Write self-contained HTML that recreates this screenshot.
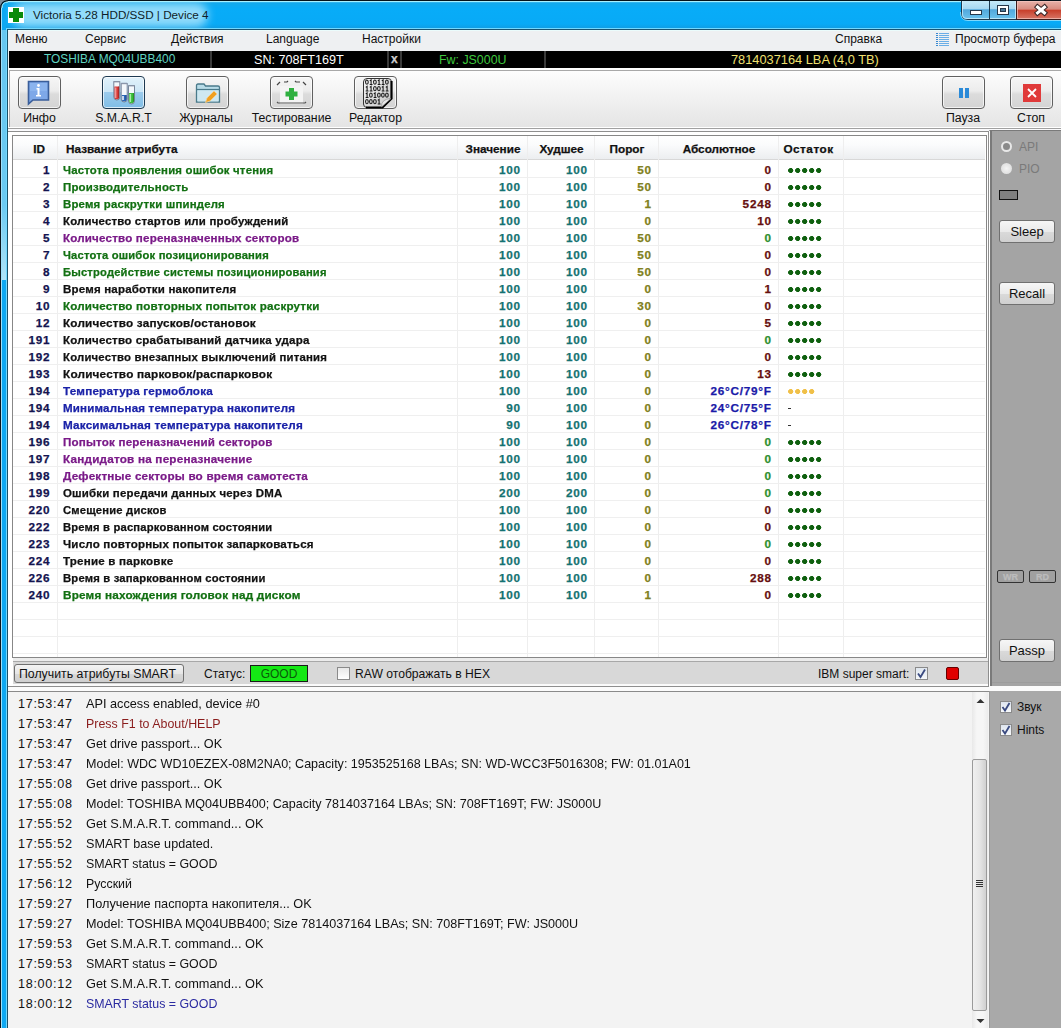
<!DOCTYPE html>
<html><head><meta charset="utf-8"><title>Victoria</title>
<style>
html,body{margin:0;padding:0;}
body{width:1061px;height:1028px;position:relative;overflow:hidden;background:#f0f0f0;font-family:"Liberation Sans", sans-serif;}
.t{position:absolute;white-space:nowrap;}
.r{position:absolute;}
svg.r{overflow:visible;}
</style></head><body>
<div class="r" style="left:0px;top:0px;width:1061px;height:30px;background:linear-gradient(#1aa8e6,#08acf8 30%,#08aaf6 80%,#1298dc);"></div>
<div class="r" style="left:0px;top:0px;width:1061px;height:1px;background:#06121a;"></div>
<div class="r" style="left:0px;top:1px;width:1061px;height:1px;background:#a8f0ff;"></div>
<div class="r" style="left:0px;top:2px;width:1061px;height:1px;background:#30b4f0;"></div>
<div class="r" style="left:0px;top:28px;width:1061px;height:1px;background:#72d8fe;"></div>
<div class="r" style="left:0px;top:29px;width:1061px;height:1px;background:#1a5470;"></div>
<div class="r" style="left:0px;top:2px;width:1061px;height:26px;overflow:hidden;"><div class="r" style="left:12px;top:1px;width:196px;height:24px;border-radius:12px;background:rgba(170,228,252,0.85);filter:blur(4px);"></div></div>
<div class="r" style="left:0px;top:0px;width:1px;height:1028px;background:#0a141c;"></div>
<div class="r" style="left:1px;top:1px;width:1px;height:1027px;background:#9fe0fa;"></div>
<div class="r" style="left:2px;top:1px;width:4px;height:1027px;background:#0ea8f2;"></div>
<div class="r" style="left:2px;top:30px;width:4px;height:250px;background:linear-gradient(#66c6f0,#6ccaf2 70%,#b0e4f8);"></div>
<div class="r" style="left:6px;top:28px;width:1px;height:1000px;background:#72d8fe;"></div>
<div class="r" style="left:7px;top:29px;width:1px;height:999px;background:#1a5068;"></div>
<svg class="r" style="left:0;top:0" width="8" height="8"><path d="M0 0 H8 V0.5 Q0.5 0.5 0.5 8 H0Z" fill="#7a8c9c"/><path d="M8 0.9 Q0.9 0.9 0.9 8" fill="none" stroke="#021018" stroke-width="1.2"/><path d="M8 2 Q2 2 2 8" fill="none" stroke="#b0f4ff" stroke-width="1"/></svg>
<div class="r" style="left:8px;top:7px;width:16px;height:16px;background:#fff;"></div>
<div class="r" style="left:13px;top:8px;width:6px;height:14px;background:#0b8a0b;"></div>
<div class="r" style="left:9px;top:12px;width:14px;height:6px;background:#0b8a0b;"></div>
<div class="t" style="left:33px;top:7.45px;font-size:11.7px;line-height:15px;color:#0e1e2a;">Victoria 5.28 HDD/SSD | Device 4</div>
<svg class="r" style="left:960px;top:0px" width="101" height="21"><defs><linearGradient id="gb" x1="0" y1="0" x2="0" y2="1"><stop offset="0" stop-color="#c8ecfa"/><stop offset="0.45" stop-color="#a6d8f2"/><stop offset="0.5" stop-color="#52a8dc"/><stop offset="1" stop-color="#6cc4ee"/></linearGradient><linearGradient id="gr" x1="0" y1="0" x2="0" y2="1"><stop offset="0" stop-color="#e8b4ac"/><stop offset="0.45" stop-color="#d88c80"/><stop offset="0.52" stop-color="#c8402c"/><stop offset="1" stop-color="#d87868"/></linearGradient></defs><path d="M1.5 0 V14 Q1.5 19.5 7 19.5 H56.5 V0Z" fill="url(#gb)" stroke="#1c3a50" stroke-width="1"/><path d="M2.5 1 V14 Q2.5 18.5 7 18.5 H55.5 V1" fill="none" stroke="#d8f4ff" stroke-width="1" opacity="0.7"/><rect x="29" y="0" width="1" height="20" fill="#1c3a50"/><rect x="56.5" y="0.5" width="45" height="19" fill="url(#gr)" stroke="#3a1c1c" stroke-width="1"/><rect x="57.5" y="1.5" width="44" height="17" fill="none" stroke="#f4c8c0" stroke-width="1" opacity="0.7"/><rect x="10.5" y="10.5" width="11" height="4" fill="#fff" stroke="#26384a" stroke-width="1"/><rect x="37.5" y="5.5" width="11" height="9" fill="#fff" stroke="#26384a" stroke-width="1"/><rect x="40.5" y="8.5" width="5" height="3" fill="#4a7898" stroke="#26384a" stroke-width="1"/><path d="M77.5 7 L84.5 13 M84.5 7 L77.5 13" stroke="#3a2626" stroke-width="5" stroke-linecap="square"/><path d="M77.5 7 L84.5 13 M84.5 7 L77.5 13" stroke="#fff" stroke-width="3" stroke-linecap="square"/></svg>
<div class="r" style="left:960px;top:0px;width:101px;height:1px;background:#06121a;"></div>
<svg class="r" style="left:960px;top:0px" width="101" height="22"><path d="M0.5 12 Q0.5 20.5 8 20.5 H101" fill="none" stroke="#9ce4fc" stroke-width="1" opacity="0.8"/></svg>
<div class="r" style="left:8px;top:30px;width:1053px;height:21px;background:#eef0f2;"></div>
<div class="r" style="left:8px;top:30px;width:1053px;height:1px;background:#eafcfc;"></div>
<div class="t" style="left:15px;top:32.34px;font-size:12px;line-height:15px;color:#111;">Меню</div>
<div class="t" style="left:85px;top:32.34px;font-size:12px;line-height:15px;color:#111;">Сервис</div>
<div class="t" style="left:171px;top:32.34px;font-size:12px;line-height:15px;color:#111;">Действия</div>
<div class="t" style="left:266px;top:32.34px;font-size:12px;line-height:15px;color:#111;">Language</div>
<div class="t" style="left:362px;top:32.34px;font-size:12px;line-height:15px;color:#111;">Настройки</div>
<div class="t" style="left:835px;top:32.34px;font-size:12px;line-height:15px;color:#111;">Справка</div>
<div class="t" style="left:955px;top:32.34px;font-size:12px;line-height:15px;color:#111;">Просмотр буфера</div>
<svg class="r" style="left:936px;top:33px" width="14" height="14"><rect x="0" y="0" width="2" height="1" fill="#3a8ad0"/><rect x="3" y="0" width="10" height="1" fill="#6aaee6"/><rect x="0" y="2" width="2" height="1" fill="#3a8ad0"/><rect x="3" y="2" width="10" height="1" fill="#6aaee6"/><rect x="0" y="4" width="2" height="1" fill="#3a8ad0"/><rect x="3" y="4" width="10" height="1" fill="#6aaee6"/><rect x="0" y="6" width="2" height="1" fill="#3a8ad0"/><rect x="3" y="6" width="10" height="1" fill="#6aaee6"/><rect x="0" y="8" width="2" height="1" fill="#3a8ad0"/><rect x="3" y="8" width="10" height="1" fill="#6aaee6"/><rect x="0" y="10" width="2" height="1" fill="#3a8ad0"/><rect x="3" y="10" width="10" height="1" fill="#6aaee6"/><rect x="0" y="12" width="2" height="1" fill="#3a8ad0"/><rect x="3" y="12" width="10" height="1" fill="#6aaee6"/></svg>
<div class="r" style="left:9px;top:51px;width:1052px;height:17px;background:#000;"></div>
<div class="r" style="left:210px;top:51px;width:2px;height:17px;background:#3a3a3a;"></div>
<div class="r" style="left:387px;top:51px;width:2px;height:17px;background:#3a3a3a;"></div>
<div class="r" style="left:400px;top:51px;width:2px;height:17px;background:#3a3a3a;"></div>
<div class="r" style="left:544px;top:51px;width:2px;height:17px;background:#3a3a3a;"></div>
<div class="t" style="left:44px;top:52.38px;font-size:11.9px;line-height:15px;color:#5fd3c0;">TOSHIBA MQ04UBB400</div>
<div class="t" style="left:254px;top:51.63px;font-size:12.6px;line-height:16px;color:#fff;">SN: 708FT169T</div>
<div class="t" style="left:391px;top:52.34px;font-size:12px;line-height:15px;color:#ccc;font-weight:bold;-webkit-text-stroke:0.25px currentColor;">x</div>
<div class="t" style="left:439px;top:51.70px;font-size:12.4px;line-height:16px;color:#3ec83e;">Fw: JS000U</div>
<div class="t" style="left:731px;top:51.56px;font-size:12.8px;line-height:16px;color:#f0e070;">7814037164 LBA (4,0 TB)</div>
<div class="r" style="left:8px;top:68px;width:1053px;height:60px;background:linear-gradient(#fff 0px,#fff 2px,#fdfdfd 3px,#e4e4e4);"></div>
<div class="r" style="left:8px;top:68px;width:1px;height:63px;background:#fcfcfc;"></div>
<div class="r" style="left:9px;top:70px;width:1052px;height:1px;background:#a8a8a8;"></div>
<div class="r" style="left:9px;top:70px;width:1px;height:58px;background:#a8a8a8;"></div>
<div class="r" style="left:8px;top:127px;width:1053px;height:1px;background:#fff;"></div>
<div class="r" style="left:8px;top:128px;width:1053px;height:1px;background:#a0a0a0;"></div>
<div class="r" style="left:8px;top:129px;width:1053px;height:2px;background:#fafafc;"></div>
<div class="r" style="left:18px;top:76px;width:43px;height:33px;box-sizing:border-box;border:1px solid #606060;border-radius:4px;background:linear-gradient(#f6f6f6,#ececec 45%,#dcdcdc 55%,#d4d4d4);box-shadow:inset 0 0 0 1px rgba(255,255,255,0.7);"></div>
<div class="r" style="left:186px;top:76px;width:43px;height:33px;box-sizing:border-box;border:1px solid #606060;border-radius:4px;background:linear-gradient(#f6f6f6,#ececec 45%,#dcdcdc 55%,#d4d4d4);box-shadow:inset 0 0 0 1px rgba(255,255,255,0.7);"></div>
<div class="r" style="left:270px;top:76px;width:43px;height:33px;box-sizing:border-box;border:1px solid #606060;border-radius:4px;background:linear-gradient(#f6f6f6,#ececec 45%,#dcdcdc 55%,#d4d4d4);box-shadow:inset 0 0 0 1px rgba(255,255,255,0.7);"></div>
<div class="r" style="left:354px;top:76px;width:43px;height:33px;box-sizing:border-box;border:1px solid #606060;border-radius:4px;background:linear-gradient(#f6f6f6,#ececec 45%,#dcdcdc 55%,#d4d4d4);box-shadow:inset 0 0 0 1px rgba(255,255,255,0.7);"></div>
<div class="r" style="left:942px;top:76px;width:43px;height:33px;box-sizing:border-box;border:1px solid #606060;border-radius:4px;background:linear-gradient(#f6f6f6,#ececec 45%,#dcdcdc 55%,#d4d4d4);box-shadow:inset 0 0 0 1px rgba(255,255,255,0.7);"></div>
<div class="r" style="left:1010px;top:76px;width:43px;height:33px;box-sizing:border-box;border:1px solid #606060;border-radius:4px;background:linear-gradient(#f6f6f6,#ececec 45%,#dcdcdc 55%,#d4d4d4);box-shadow:inset 0 0 0 1px rgba(255,255,255,0.7);"></div>
<div class="r" style="left:102px;top:76px;width:43px;height:33px;box-sizing:border-box;border:1px solid #1e3a52;border-radius:4px;background:linear-gradient(#e2f2fb,#cbe6f6 48%,#9ccbec 50%,#7fbde6);box-shadow:inset 0 0 0 1px rgba(255,255,255,0.7);"></div>
<div class="t" style="left:-20.5px;top:111.24px;font-size:12.3px;line-height:15px;color:#111;width:120px;text-align:center;">Инфо</div>
<div class="t" style="left:63.5px;top:111.24px;font-size:12.3px;line-height:15px;color:#111;width:120px;text-align:center;">S.M.A.R.T</div>
<div class="t" style="left:146px;top:111.24px;font-size:12.3px;line-height:15px;color:#111;width:120px;text-align:center;">Журналы</div>
<div class="t" style="left:231.5px;top:111.24px;font-size:12.3px;line-height:15px;color:#111;width:120px;text-align:center;">Тестирование</div>
<div class="t" style="left:315.5px;top:111.24px;font-size:12.3px;line-height:15px;color:#111;width:120px;text-align:center;">Редактор</div>
<div class="t" style="left:903px;top:111.24px;font-size:12.3px;line-height:15px;color:#111;width:120px;text-align:center;">Пауза</div>
<div class="t" style="left:971px;top:111.24px;font-size:12.3px;line-height:15px;color:#111;width:120px;text-align:center;">Стоп</div>
<svg class="r" style="left:27px;top:80px" width="24" height="26"><path d="M1.5 1.5 H21.5 V20 H6 L1.5 24 Z" fill="#7ea8e8" stroke="#3a5e9a" stroke-width="1.6"/><rect x="3" y="3" width="17" height="8" fill="#94bcf2" opacity="0.6"/><circle cx="11.5" cy="5.5" r="1.4" fill="#fff"/><path d="M9.5 8 H12.5 V15 H14 V16.5 H9 V15 H10.5 V9.5 H9.5Z" fill="#fff"/></svg>
<svg class="r" style="left:112px;top:80px" width="26" height="26"><path d="M1.8 1.5 H7.8 V17 A3 3 0 0 1 1.8 17 Z" fill="#f4f8fc"/><path d="M2.3 6.5 H7.3 V17 A2.5 2.5 0 0 1 2.3 17 Z" fill="#d83a38"/><rect x="2.8" y="7.5" width="1.6" height="10.5" fill="#f4a0a0" opacity="0.9"/><rect x="6.199999999999999" y="6.5" width="1" height="11.5" fill="#902020" opacity="0.7"/><path d="M1.8 1.5 H7.8 V17 A3 3 0 0 1 1.8 17 Z" fill="none" stroke="#6a7890" stroke-width="0.9"/><rect x="1.5" y="1.2" width="6.6" height="1.2" fill="#8a96aa"/><path d="M9.2 3.3 H15.2 V19 A3 3 0 0 1 9.2 19 Z" fill="#f4f8fc"/><path d="M9.7 15 H14.7 V19 A2.5 2.5 0 0 1 9.7 19 Z" fill="#2a66b8"/><rect x="10.2" y="16" width="1.6" height="4" fill="#ffffff" opacity="0.9"/><rect x="13.6" y="15" width="1" height="5" fill="#153a80" opacity="0.7"/><path d="M9.2 3.3 H15.2 V19 A3 3 0 0 1 9.2 19 Z" fill="none" stroke="#6a7890" stroke-width="0.9"/><rect x="8.899999999999999" y="3.0" width="6.6" height="1.2" fill="#8a96aa"/><path d="M16.5 5.5 H22.5 V21 A3 3 0 0 1 16.5 21 Z" fill="#f4f8fc"/><path d="M17.0 13 H22.0 V21 A2.5 2.5 0 0 1 17.0 21 Z" fill="#3cbc3c"/><rect x="17.5" y="14" width="1.6" height="8" fill="#b0f4b0" opacity="0.9"/><rect x="20.9" y="13" width="1" height="9" fill="#1a8a1a" opacity="0.7"/><path d="M16.5 5.5 H22.5 V21 A3 3 0 0 1 16.5 21 Z" fill="none" stroke="#6a7890" stroke-width="0.9"/><rect x="16.2" y="5.2" width="6.6" height="1.2" fill="#8a96aa"/></svg>
<svg class="r" style="left:195px;top:82px" width="26" height="22"><path d="M1.5 3.5 Q1.5 2 3 2 H9 L10.5 4 H23 Q24.5 4 24.5 5.5 V20 H1.5Z" fill="#b8dce8" stroke="#4a7a8a" stroke-width="1.3"/><path d="M1.5 7.5 H24.5" stroke="#4a7a8a" stroke-width="1.2"/><rect x="2.5" y="8.5" width="21" height="11" fill="#cfe8f0"/><path d="M10.5 20.5 L12 16 L19 9 L22 12 L15 19 Z" fill="#f0a020" stroke="#f4d090" stroke-width="0.8"/></svg>
<svg class="r" style="left:276px;top:80px" width="32" height="26"><path d="M1 5 L4 2 M8 2 H11 L12 1 M19 1 L20 2 H24 M27 2 L30 5" stroke="#444" stroke-width="1.2" fill="none"/><rect x="4" y="6" width="23" height="18" fill="#f4f4f4"/><path d="M1 22 L2 23 H29 L30 22" stroke="#555" stroke-width="1.2" fill="none"/><rect x="13" y="8" width="5" height="12" fill="#2fb040"/><rect x="9.5" y="11.5" width="12" height="5" fill="#2fb040"/></svg>
<svg class="r" style="left:361px;top:76px" width="34" height="34"><defs><linearGradient id="gd" x1="0" y1="0" x2="1" y2="1"><stop offset="0" stop-color="#fafafa"/><stop offset="1" stop-color="#c4c4c4"/></linearGradient></defs><path d="M6 2.5 H27 Q30.5 2.5 30.5 6 V22.5 L21.5 31.5 H6 Q2.5 31.5 2.5 28 V6 Q2.5 2.5 6 2.5Z" fill="url(#gd)" stroke="#333" stroke-width="1"/><path d="M30.5 5 V22.5 L21.5 31.5 H5" fill="none" stroke="#000" stroke-width="2.2"/><path d="M20.5 31 Q20 23 30 22.5 Z" fill="#e8e8e8" stroke="#888" stroke-width="0.6"/><ellipse cx="5.9" cy="6.1" rx="1.35" ry="2.1" fill="none" stroke="#1a1a1a" stroke-width="1.05"/><path d="M8.8 4.8 L10.1 3.8 V8.4 M8.7 8.4 H11.5" fill="none" stroke="#1a1a1a" stroke-width="1.05"/><ellipse cx="13.9" cy="6.1" rx="1.35" ry="2.1" fill="none" stroke="#1a1a1a" stroke-width="1.05"/><path d="M16.8 4.8 L18.1 3.8 V8.4 M16.7 8.4 H19.5" fill="none" stroke="#1a1a1a" stroke-width="1.05"/><path d="M20.8 4.8 L22.1 3.8 V8.4 M20.7 8.4 H23.5" fill="none" stroke="#1a1a1a" stroke-width="1.05"/><ellipse cx="25.9" cy="6.1" rx="1.35" ry="2.1" fill="none" stroke="#1a1a1a" stroke-width="1.05"/><path d="M4.8 11.3 L6.1 10.3 V14.9 M4.7 14.9 H7.5" fill="none" stroke="#1a1a1a" stroke-width="1.05"/><path d="M8.8 11.3 L10.1 10.3 V14.9 M8.7 14.9 H11.5" fill="none" stroke="#1a1a1a" stroke-width="1.05"/><ellipse cx="13.9" cy="12.6" rx="1.35" ry="2.1" fill="none" stroke="#1a1a1a" stroke-width="1.05"/><ellipse cx="17.9" cy="12.6" rx="1.35" ry="2.1" fill="none" stroke="#1a1a1a" stroke-width="1.05"/><path d="M20.8 11.3 L22.1 10.3 V14.9 M20.7 14.9 H23.5" fill="none" stroke="#1a1a1a" stroke-width="1.05"/><path d="M24.8 11.3 L26.1 10.3 V14.9 M24.7 14.9 H27.5" fill="none" stroke="#1a1a1a" stroke-width="1.05"/><path d="M4.8 17.8 L6.1 16.8 V21.4 M4.7 21.4 H7.5" fill="none" stroke="#1a1a1a" stroke-width="1.05"/><ellipse cx="9.9" cy="19.1" rx="1.35" ry="2.1" fill="none" stroke="#1a1a1a" stroke-width="1.05"/><path d="M12.8 17.8 L14.1 16.8 V21.4 M12.7 21.4 H15.5" fill="none" stroke="#1a1a1a" stroke-width="1.05"/><ellipse cx="17.9" cy="19.1" rx="1.35" ry="2.1" fill="none" stroke="#1a1a1a" stroke-width="1.05"/><ellipse cx="21.9" cy="19.1" rx="1.35" ry="2.1" fill="none" stroke="#1a1a1a" stroke-width="1.05"/><ellipse cx="25.9" cy="19.1" rx="1.35" ry="2.1" fill="none" stroke="#1a1a1a" stroke-width="1.05"/><ellipse cx="5.9" cy="25.6" rx="1.35" ry="2.1" fill="none" stroke="#1a1a1a" stroke-width="1.05"/><ellipse cx="9.9" cy="25.6" rx="1.35" ry="2.1" fill="none" stroke="#1a1a1a" stroke-width="1.05"/><ellipse cx="13.9" cy="25.6" rx="1.35" ry="2.1" fill="none" stroke="#1a1a1a" stroke-width="1.05"/><path d="M16.8 24.3 L18.1 23.3 V27.9 M16.7 27.9 H19.5" fill="none" stroke="#1a1a1a" stroke-width="1.05"/></svg>
<div class="r" style="left:959px;top:88px;width:4px;height:10px;background:#2a8ad8;"></div>
<div class="r" style="left:965px;top:88px;width:4px;height:10px;background:#2a8ad8;"></div>
<div class="r" style="left:1023px;top:84px;width:18px;height:18px;background:#e03a3a;"></div>
<svg class="r" style="left:1023px;top:84px" width="18" height="18"><path d="M5 5 L13 13 M13 5 L5 13" stroke="#fff" stroke-width="1.8"/></svg>
<div class="r" style="left:8px;top:131px;width:981px;height:556px;background:#fff;"></div>
<div class="r" style="left:8px;top:131px;width:981px;height:1px;background:#8e8e8e;"></div>
<div class="r" style="left:988px;top:131px;width:1px;height:556px;background:#8e8e8e;"></div>
<div class="r" style="left:8px;top:686px;width:981px;height:1px;background:#8e8e8e;"></div>
<div class="r" style="left:12px;top:135px;width:975px;height:523px;border:1px solid #878787;box-sizing:border-box;background:#fff;"></div>
<div class="r" style="left:13px;top:136px;width:972px;height:23px;background:linear-gradient(#ffffff,#fafbfc 40%,#eceef0);"></div>
<div class="r" style="left:13px;top:159px;width:972px;height:1px;background:#d8d8d8;"></div>
<div class="r" style="left:57px;top:136px;width:1px;height:521px;background:#eeeeee;"></div>
<div class="r" style="left:457px;top:136px;width:1px;height:521px;background:#eeeeee;"></div>
<div class="r" style="left:527px;top:136px;width:1px;height:521px;background:#eeeeee;"></div>
<div class="r" style="left:594px;top:136px;width:1px;height:521px;background:#eeeeee;"></div>
<div class="r" style="left:658px;top:136px;width:1px;height:521px;background:#eeeeee;"></div>
<div class="r" style="left:778px;top:136px;width:1px;height:521px;background:#eeeeee;"></div>
<div class="r" style="left:843px;top:136px;width:1px;height:521px;background:#eeeeee;"></div>
<div class="t" style="left:13px;top:141.43px;font-size:11.75px;line-height:15px;color:#111;font-weight:bold;-webkit-text-stroke:0.25px currentColor;width:32px;text-align:right;">ID</div>
<div class="t" style="left:66px;top:141.43px;font-size:11.75px;line-height:15px;color:#111;font-weight:bold;-webkit-text-stroke:0.25px currentColor;">Название атрибута</div>
<div class="t" style="left:458px;top:141.43px;font-size:11.75px;line-height:15px;color:#111;font-weight:bold;-webkit-text-stroke:0.25px currentColor;width:70px;text-align:center;">Значение</div>
<div class="t" style="left:528px;top:141.43px;font-size:11.75px;line-height:15px;color:#111;font-weight:bold;-webkit-text-stroke:0.25px currentColor;width:67px;text-align:center;">Худшее</div>
<div class="t" style="left:595px;top:141.43px;font-size:11.75px;line-height:15px;color:#111;font-weight:bold;-webkit-text-stroke:0.25px currentColor;width:64px;text-align:center;">Порог</div>
<div class="t" style="left:659px;top:141.43px;font-size:11.75px;line-height:15px;color:#111;font-weight:bold;-webkit-text-stroke:0.25px currentColor;width:120px;text-align:center;">Абсолютное</div>
<div class="t" style="left:776px;top:141.43px;font-size:11.75px;line-height:15px;color:#111;font-weight:bold;-webkit-text-stroke:0.25px currentColor;letter-spacing:0.5px;width:65px;text-align:center;">Остаток</div>
<div class="r" style="left:13px;top:177px;width:972px;height:1px;background:#efefef;"></div>
<div class="r" style="left:13px;top:194px;width:972px;height:1px;background:#efefef;"></div>
<div class="r" style="left:13px;top:211px;width:972px;height:1px;background:#efefef;"></div>
<div class="r" style="left:13px;top:228px;width:972px;height:1px;background:#efefef;"></div>
<div class="r" style="left:13px;top:245px;width:972px;height:1px;background:#efefef;"></div>
<div class="r" style="left:13px;top:262px;width:972px;height:1px;background:#efefef;"></div>
<div class="r" style="left:13px;top:279px;width:972px;height:1px;background:#efefef;"></div>
<div class="r" style="left:13px;top:296px;width:972px;height:1px;background:#efefef;"></div>
<div class="r" style="left:13px;top:313px;width:972px;height:1px;background:#efefef;"></div>
<div class="r" style="left:13px;top:330px;width:972px;height:1px;background:#efefef;"></div>
<div class="r" style="left:13px;top:347px;width:972px;height:1px;background:#efefef;"></div>
<div class="r" style="left:13px;top:364px;width:972px;height:1px;background:#efefef;"></div>
<div class="r" style="left:13px;top:381px;width:972px;height:1px;background:#efefef;"></div>
<div class="r" style="left:13px;top:398px;width:972px;height:1px;background:#efefef;"></div>
<div class="r" style="left:13px;top:415px;width:972px;height:1px;background:#efefef;"></div>
<div class="r" style="left:13px;top:432px;width:972px;height:1px;background:#efefef;"></div>
<div class="r" style="left:13px;top:449px;width:972px;height:1px;background:#efefef;"></div>
<div class="r" style="left:13px;top:466px;width:972px;height:1px;background:#efefef;"></div>
<div class="r" style="left:13px;top:483px;width:972px;height:1px;background:#efefef;"></div>
<div class="r" style="left:13px;top:500px;width:972px;height:1px;background:#efefef;"></div>
<div class="r" style="left:13px;top:517px;width:972px;height:1px;background:#efefef;"></div>
<div class="r" style="left:13px;top:534px;width:972px;height:1px;background:#efefef;"></div>
<div class="r" style="left:13px;top:551px;width:972px;height:1px;background:#efefef;"></div>
<div class="r" style="left:13px;top:568px;width:972px;height:1px;background:#efefef;"></div>
<div class="r" style="left:13px;top:585px;width:972px;height:1px;background:#efefef;"></div>
<div class="r" style="left:13px;top:602px;width:972px;height:1px;background:#efefef;"></div>
<div class="r" style="left:13px;top:619px;width:972px;height:1px;background:#efefef;"></div>
<div class="r" style="left:13px;top:636px;width:972px;height:1px;background:#efefef;"></div>
<div class="r" style="left:13px;top:653px;width:972px;height:1px;background:#efefef;"></div>
<div class="t" style="left:-100.5px;top:162.43px;font-size:11.75px;line-height:15px;color:#141450;font-weight:bold;-webkit-text-stroke:0.25px currentColor;letter-spacing:0.75px;width:150.75px;text-align:right;">1</div>
<div class="t" style="left:63px;top:163.02px;font-size:11.5px;line-height:14px;color:#127012;font-weight:bold;-webkit-text-stroke:0.25px currentColor;letter-spacing:0.19px;transform:scaleX(0.9891);transform-origin:0 0;">Частота проявления ошибок чтения</div>
<div class="t" style="left:370px;top:162.43px;font-size:11.75px;line-height:15px;color:#147272;font-weight:bold;-webkit-text-stroke:0.25px currentColor;letter-spacing:0.75px;width:150.75px;text-align:right;">100</div>
<div class="t" style="left:437px;top:162.43px;font-size:11.75px;line-height:15px;color:#147272;font-weight:bold;-webkit-text-stroke:0.25px currentColor;letter-spacing:0.75px;width:150.75px;text-align:right;">100</div>
<div class="t" style="left:501px;top:162.43px;font-size:11.75px;line-height:15px;color:#808020;font-weight:bold;-webkit-text-stroke:0.25px currentColor;letter-spacing:0.75px;width:150.75px;text-align:right;">50</div>
<div class="t" style="left:621px;top:162.43px;font-size:11.75px;line-height:15px;color:#661010;font-weight:bold;-webkit-text-stroke:0.25px currentColor;letter-spacing:0.75px;width:150.75px;text-align:right;">0</div>
<div class="r" style="left:787.5px;top:167.5px;width:35px;height:5.5px;background:radial-gradient(circle at 2.75px 2.75px,#0f600f 2.4px,rgba(15,96,15,0) 2.9px) 0 0/7px 5.5px repeat-x;"></div>
<div class="t" style="left:-100.5px;top:179.43px;font-size:11.75px;line-height:15px;color:#141450;font-weight:bold;-webkit-text-stroke:0.25px currentColor;letter-spacing:0.75px;width:150.75px;text-align:right;">2</div>
<div class="t" style="left:63px;top:180.02px;font-size:11.5px;line-height:14px;color:#127012;font-weight:bold;-webkit-text-stroke:0.25px currentColor;letter-spacing:0.19px;transform:scaleX(0.9968);transform-origin:0 0;">Производительность</div>
<div class="t" style="left:370px;top:179.43px;font-size:11.75px;line-height:15px;color:#147272;font-weight:bold;-webkit-text-stroke:0.25px currentColor;letter-spacing:0.75px;width:150.75px;text-align:right;">100</div>
<div class="t" style="left:437px;top:179.43px;font-size:11.75px;line-height:15px;color:#147272;font-weight:bold;-webkit-text-stroke:0.25px currentColor;letter-spacing:0.75px;width:150.75px;text-align:right;">100</div>
<div class="t" style="left:501px;top:179.43px;font-size:11.75px;line-height:15px;color:#808020;font-weight:bold;-webkit-text-stroke:0.25px currentColor;letter-spacing:0.75px;width:150.75px;text-align:right;">50</div>
<div class="t" style="left:621px;top:179.43px;font-size:11.75px;line-height:15px;color:#661010;font-weight:bold;-webkit-text-stroke:0.25px currentColor;letter-spacing:0.75px;width:150.75px;text-align:right;">0</div>
<div class="r" style="left:787.5px;top:184.5px;width:35px;height:5.5px;background:radial-gradient(circle at 2.75px 2.75px,#0f600f 2.4px,rgba(15,96,15,0) 2.9px) 0 0/7px 5.5px repeat-x;"></div>
<div class="t" style="left:-100.5px;top:196.43px;font-size:11.75px;line-height:15px;color:#141450;font-weight:bold;-webkit-text-stroke:0.25px currentColor;letter-spacing:0.75px;width:150.75px;text-align:right;">3</div>
<div class="t" style="left:63px;top:197.02px;font-size:11.5px;line-height:14px;color:#127012;font-weight:bold;-webkit-text-stroke:0.25px currentColor;letter-spacing:0.19px;transform:scaleX(0.9908);transform-origin:0 0;">Время раскрутки шпинделя</div>
<div class="t" style="left:370px;top:196.43px;font-size:11.75px;line-height:15px;color:#147272;font-weight:bold;-webkit-text-stroke:0.25px currentColor;letter-spacing:0.75px;width:150.75px;text-align:right;">100</div>
<div class="t" style="left:437px;top:196.43px;font-size:11.75px;line-height:15px;color:#147272;font-weight:bold;-webkit-text-stroke:0.25px currentColor;letter-spacing:0.75px;width:150.75px;text-align:right;">100</div>
<div class="t" style="left:501px;top:196.43px;font-size:11.75px;line-height:15px;color:#808020;font-weight:bold;-webkit-text-stroke:0.25px currentColor;letter-spacing:0.75px;width:150.75px;text-align:right;">1</div>
<div class="t" style="left:621px;top:196.43px;font-size:11.75px;line-height:15px;color:#661010;font-weight:bold;-webkit-text-stroke:0.25px currentColor;letter-spacing:0.75px;width:150.75px;text-align:right;">5248</div>
<div class="r" style="left:787.5px;top:201.5px;width:35px;height:5.5px;background:radial-gradient(circle at 2.75px 2.75px,#0f600f 2.4px,rgba(15,96,15,0) 2.9px) 0 0/7px 5.5px repeat-x;"></div>
<div class="t" style="left:-100.5px;top:213.43px;font-size:11.75px;line-height:15px;color:#141450;font-weight:bold;-webkit-text-stroke:0.25px currentColor;letter-spacing:0.75px;width:150.75px;text-align:right;">4</div>
<div class="t" style="left:63px;top:214.02px;font-size:11.5px;line-height:14px;color:#111111;font-weight:bold;-webkit-text-stroke:0.25px currentColor;letter-spacing:0.19px;transform:scaleX(0.9938);transform-origin:0 0;">Количество стартов или пробуждений</div>
<div class="t" style="left:370px;top:213.43px;font-size:11.75px;line-height:15px;color:#147272;font-weight:bold;-webkit-text-stroke:0.25px currentColor;letter-spacing:0.75px;width:150.75px;text-align:right;">100</div>
<div class="t" style="left:437px;top:213.43px;font-size:11.75px;line-height:15px;color:#147272;font-weight:bold;-webkit-text-stroke:0.25px currentColor;letter-spacing:0.75px;width:150.75px;text-align:right;">100</div>
<div class="t" style="left:501px;top:213.43px;font-size:11.75px;line-height:15px;color:#808020;font-weight:bold;-webkit-text-stroke:0.25px currentColor;letter-spacing:0.75px;width:150.75px;text-align:right;">0</div>
<div class="t" style="left:621px;top:213.43px;font-size:11.75px;line-height:15px;color:#661010;font-weight:bold;-webkit-text-stroke:0.25px currentColor;letter-spacing:0.75px;width:150.75px;text-align:right;">10</div>
<div class="r" style="left:787.5px;top:218.5px;width:35px;height:5.5px;background:radial-gradient(circle at 2.75px 2.75px,#0f600f 2.4px,rgba(15,96,15,0) 2.9px) 0 0/7px 5.5px repeat-x;"></div>
<div class="t" style="left:-100.5px;top:230.43px;font-size:11.75px;line-height:15px;color:#141450;font-weight:bold;-webkit-text-stroke:0.25px currentColor;letter-spacing:0.75px;width:150.75px;text-align:right;">5</div>
<div class="t" style="left:63px;top:231.02px;font-size:11.5px;line-height:14px;color:#7a1a88;font-weight:bold;-webkit-text-stroke:0.25px currentColor;letter-spacing:0.19px;transform:scaleX(1.0077);transform-origin:0 0;">Количество переназначенных секторов</div>
<div class="t" style="left:370px;top:230.43px;font-size:11.75px;line-height:15px;color:#147272;font-weight:bold;-webkit-text-stroke:0.25px currentColor;letter-spacing:0.75px;width:150.75px;text-align:right;">100</div>
<div class="t" style="left:437px;top:230.43px;font-size:11.75px;line-height:15px;color:#147272;font-weight:bold;-webkit-text-stroke:0.25px currentColor;letter-spacing:0.75px;width:150.75px;text-align:right;">100</div>
<div class="t" style="left:501px;top:230.43px;font-size:11.75px;line-height:15px;color:#808020;font-weight:bold;-webkit-text-stroke:0.25px currentColor;letter-spacing:0.75px;width:150.75px;text-align:right;">50</div>
<div class="t" style="left:621px;top:230.43px;font-size:11.75px;line-height:15px;color:#2f8f2f;font-weight:bold;-webkit-text-stroke:0.25px currentColor;letter-spacing:0.75px;width:150.75px;text-align:right;">0</div>
<div class="r" style="left:787.5px;top:235.5px;width:35px;height:5.5px;background:radial-gradient(circle at 2.75px 2.75px,#0f600f 2.4px,rgba(15,96,15,0) 2.9px) 0 0/7px 5.5px repeat-x;"></div>
<div class="t" style="left:-100.5px;top:247.43px;font-size:11.75px;line-height:15px;color:#141450;font-weight:bold;-webkit-text-stroke:0.25px currentColor;letter-spacing:0.75px;width:150.75px;text-align:right;">7</div>
<div class="t" style="left:63px;top:248.02px;font-size:11.5px;line-height:14px;color:#127012;font-weight:bold;-webkit-text-stroke:0.25px currentColor;letter-spacing:0.19px;transform:scaleX(0.9766);transform-origin:0 0;">Частота ошибок позиционирования</div>
<div class="t" style="left:370px;top:247.43px;font-size:11.75px;line-height:15px;color:#147272;font-weight:bold;-webkit-text-stroke:0.25px currentColor;letter-spacing:0.75px;width:150.75px;text-align:right;">100</div>
<div class="t" style="left:437px;top:247.43px;font-size:11.75px;line-height:15px;color:#147272;font-weight:bold;-webkit-text-stroke:0.25px currentColor;letter-spacing:0.75px;width:150.75px;text-align:right;">100</div>
<div class="t" style="left:501px;top:247.43px;font-size:11.75px;line-height:15px;color:#808020;font-weight:bold;-webkit-text-stroke:0.25px currentColor;letter-spacing:0.75px;width:150.75px;text-align:right;">50</div>
<div class="t" style="left:621px;top:247.43px;font-size:11.75px;line-height:15px;color:#661010;font-weight:bold;-webkit-text-stroke:0.25px currentColor;letter-spacing:0.75px;width:150.75px;text-align:right;">0</div>
<div class="r" style="left:787.5px;top:252.5px;width:35px;height:5.5px;background:radial-gradient(circle at 2.75px 2.75px,#0f600f 2.4px,rgba(15,96,15,0) 2.9px) 0 0/7px 5.5px repeat-x;"></div>
<div class="t" style="left:-100.5px;top:264.43px;font-size:11.75px;line-height:15px;color:#141450;font-weight:bold;-webkit-text-stroke:0.25px currentColor;letter-spacing:0.75px;width:150.75px;text-align:right;">8</div>
<div class="t" style="left:63px;top:265.02px;font-size:11.5px;line-height:14px;color:#127012;font-weight:bold;-webkit-text-stroke:0.25px currentColor;letter-spacing:0.19px;transform:scaleX(0.9725);transform-origin:0 0;">Быстродействие системы позиционирования</div>
<div class="t" style="left:370px;top:264.43px;font-size:11.75px;line-height:15px;color:#147272;font-weight:bold;-webkit-text-stroke:0.25px currentColor;letter-spacing:0.75px;width:150.75px;text-align:right;">100</div>
<div class="t" style="left:437px;top:264.43px;font-size:11.75px;line-height:15px;color:#147272;font-weight:bold;-webkit-text-stroke:0.25px currentColor;letter-spacing:0.75px;width:150.75px;text-align:right;">100</div>
<div class="t" style="left:501px;top:264.43px;font-size:11.75px;line-height:15px;color:#808020;font-weight:bold;-webkit-text-stroke:0.25px currentColor;letter-spacing:0.75px;width:150.75px;text-align:right;">50</div>
<div class="t" style="left:621px;top:264.43px;font-size:11.75px;line-height:15px;color:#661010;font-weight:bold;-webkit-text-stroke:0.25px currentColor;letter-spacing:0.75px;width:150.75px;text-align:right;">0</div>
<div class="r" style="left:787.5px;top:269.5px;width:35px;height:5.5px;background:radial-gradient(circle at 2.75px 2.75px,#0f600f 2.4px,rgba(15,96,15,0) 2.9px) 0 0/7px 5.5px repeat-x;"></div>
<div class="t" style="left:-100.5px;top:281.43px;font-size:11.75px;line-height:15px;color:#141450;font-weight:bold;-webkit-text-stroke:0.25px currentColor;letter-spacing:0.75px;width:150.75px;text-align:right;">9</div>
<div class="t" style="left:63px;top:282.02px;font-size:11.5px;line-height:14px;color:#111111;font-weight:bold;-webkit-text-stroke:0.25px currentColor;letter-spacing:0.19px;transform:scaleX(1.0012);transform-origin:0 0;">Время наработки накопителя</div>
<div class="t" style="left:370px;top:281.43px;font-size:11.75px;line-height:15px;color:#147272;font-weight:bold;-webkit-text-stroke:0.25px currentColor;letter-spacing:0.75px;width:150.75px;text-align:right;">100</div>
<div class="t" style="left:437px;top:281.43px;font-size:11.75px;line-height:15px;color:#147272;font-weight:bold;-webkit-text-stroke:0.25px currentColor;letter-spacing:0.75px;width:150.75px;text-align:right;">100</div>
<div class="t" style="left:501px;top:281.43px;font-size:11.75px;line-height:15px;color:#808020;font-weight:bold;-webkit-text-stroke:0.25px currentColor;letter-spacing:0.75px;width:150.75px;text-align:right;">0</div>
<div class="t" style="left:621px;top:281.43px;font-size:11.75px;line-height:15px;color:#661010;font-weight:bold;-webkit-text-stroke:0.25px currentColor;letter-spacing:0.75px;width:150.75px;text-align:right;">1</div>
<div class="r" style="left:787.5px;top:286.5px;width:35px;height:5.5px;background:radial-gradient(circle at 2.75px 2.75px,#0f600f 2.4px,rgba(15,96,15,0) 2.9px) 0 0/7px 5.5px repeat-x;"></div>
<div class="t" style="left:-100.5px;top:298.43px;font-size:11.75px;line-height:15px;color:#141450;font-weight:bold;-webkit-text-stroke:0.25px currentColor;letter-spacing:0.75px;width:150.75px;text-align:right;">10</div>
<div class="t" style="left:63px;top:299.02px;font-size:11.5px;line-height:14px;color:#127012;font-weight:bold;-webkit-text-stroke:0.25px currentColor;letter-spacing:0.19px;transform:scaleX(1.0107);transform-origin:0 0;">Количество повторных попыток раскрутки</div>
<div class="t" style="left:370px;top:298.43px;font-size:11.75px;line-height:15px;color:#147272;font-weight:bold;-webkit-text-stroke:0.25px currentColor;letter-spacing:0.75px;width:150.75px;text-align:right;">100</div>
<div class="t" style="left:437px;top:298.43px;font-size:11.75px;line-height:15px;color:#147272;font-weight:bold;-webkit-text-stroke:0.25px currentColor;letter-spacing:0.75px;width:150.75px;text-align:right;">100</div>
<div class="t" style="left:501px;top:298.43px;font-size:11.75px;line-height:15px;color:#808020;font-weight:bold;-webkit-text-stroke:0.25px currentColor;letter-spacing:0.75px;width:150.75px;text-align:right;">30</div>
<div class="t" style="left:621px;top:298.43px;font-size:11.75px;line-height:15px;color:#661010;font-weight:bold;-webkit-text-stroke:0.25px currentColor;letter-spacing:0.75px;width:150.75px;text-align:right;">0</div>
<div class="r" style="left:787.5px;top:303.5px;width:35px;height:5.5px;background:radial-gradient(circle at 2.75px 2.75px,#0f600f 2.4px,rgba(15,96,15,0) 2.9px) 0 0/7px 5.5px repeat-x;"></div>
<div class="t" style="left:-100.5px;top:315.43px;font-size:11.75px;line-height:15px;color:#141450;font-weight:bold;-webkit-text-stroke:0.25px currentColor;letter-spacing:0.75px;width:150.75px;text-align:right;">12</div>
<div class="t" style="left:63px;top:316.02px;font-size:11.5px;line-height:14px;color:#111111;font-weight:bold;-webkit-text-stroke:0.25px currentColor;letter-spacing:0.19px;transform:scaleX(1.0207);transform-origin:0 0;">Количество запусков/остановок</div>
<div class="t" style="left:370px;top:315.43px;font-size:11.75px;line-height:15px;color:#147272;font-weight:bold;-webkit-text-stroke:0.25px currentColor;letter-spacing:0.75px;width:150.75px;text-align:right;">100</div>
<div class="t" style="left:437px;top:315.43px;font-size:11.75px;line-height:15px;color:#147272;font-weight:bold;-webkit-text-stroke:0.25px currentColor;letter-spacing:0.75px;width:150.75px;text-align:right;">100</div>
<div class="t" style="left:501px;top:315.43px;font-size:11.75px;line-height:15px;color:#808020;font-weight:bold;-webkit-text-stroke:0.25px currentColor;letter-spacing:0.75px;width:150.75px;text-align:right;">0</div>
<div class="t" style="left:621px;top:315.43px;font-size:11.75px;line-height:15px;color:#661010;font-weight:bold;-webkit-text-stroke:0.25px currentColor;letter-spacing:0.75px;width:150.75px;text-align:right;">5</div>
<div class="r" style="left:787.5px;top:320.5px;width:35px;height:5.5px;background:radial-gradient(circle at 2.75px 2.75px,#0f600f 2.4px,rgba(15,96,15,0) 2.9px) 0 0/7px 5.5px repeat-x;"></div>
<div class="t" style="left:-100.5px;top:332.43px;font-size:11.75px;line-height:15px;color:#141450;font-weight:bold;-webkit-text-stroke:0.25px currentColor;letter-spacing:0.75px;width:150.75px;text-align:right;">191</div>
<div class="t" style="left:63px;top:333.02px;font-size:11.5px;line-height:14px;color:#111111;font-weight:bold;-webkit-text-stroke:0.25px currentColor;letter-spacing:0.19px;transform:scaleX(1.0053);transform-origin:0 0;">Количество срабатываний датчика удара</div>
<div class="t" style="left:370px;top:332.43px;font-size:11.75px;line-height:15px;color:#147272;font-weight:bold;-webkit-text-stroke:0.25px currentColor;letter-spacing:0.75px;width:150.75px;text-align:right;">100</div>
<div class="t" style="left:437px;top:332.43px;font-size:11.75px;line-height:15px;color:#147272;font-weight:bold;-webkit-text-stroke:0.25px currentColor;letter-spacing:0.75px;width:150.75px;text-align:right;">100</div>
<div class="t" style="left:501px;top:332.43px;font-size:11.75px;line-height:15px;color:#808020;font-weight:bold;-webkit-text-stroke:0.25px currentColor;letter-spacing:0.75px;width:150.75px;text-align:right;">0</div>
<div class="t" style="left:621px;top:332.43px;font-size:11.75px;line-height:15px;color:#2f8f2f;font-weight:bold;-webkit-text-stroke:0.25px currentColor;letter-spacing:0.75px;width:150.75px;text-align:right;">0</div>
<div class="r" style="left:787.5px;top:337.5px;width:35px;height:5.5px;background:radial-gradient(circle at 2.75px 2.75px,#0f600f 2.4px,rgba(15,96,15,0) 2.9px) 0 0/7px 5.5px repeat-x;"></div>
<div class="t" style="left:-100.5px;top:349.43px;font-size:11.75px;line-height:15px;color:#141450;font-weight:bold;-webkit-text-stroke:0.25px currentColor;letter-spacing:0.75px;width:150.75px;text-align:right;">192</div>
<div class="t" style="left:63px;top:350.02px;font-size:11.5px;line-height:14px;color:#111111;font-weight:bold;-webkit-text-stroke:0.25px currentColor;letter-spacing:0.19px;transform:scaleX(0.9891);transform-origin:0 0;">Количество внезапных выключений питания</div>
<div class="t" style="left:370px;top:349.43px;font-size:11.75px;line-height:15px;color:#147272;font-weight:bold;-webkit-text-stroke:0.25px currentColor;letter-spacing:0.75px;width:150.75px;text-align:right;">100</div>
<div class="t" style="left:437px;top:349.43px;font-size:11.75px;line-height:15px;color:#147272;font-weight:bold;-webkit-text-stroke:0.25px currentColor;letter-spacing:0.75px;width:150.75px;text-align:right;">100</div>
<div class="t" style="left:501px;top:349.43px;font-size:11.75px;line-height:15px;color:#808020;font-weight:bold;-webkit-text-stroke:0.25px currentColor;letter-spacing:0.75px;width:150.75px;text-align:right;">0</div>
<div class="t" style="left:621px;top:349.43px;font-size:11.75px;line-height:15px;color:#661010;font-weight:bold;-webkit-text-stroke:0.25px currentColor;letter-spacing:0.75px;width:150.75px;text-align:right;">0</div>
<div class="r" style="left:787.5px;top:354.5px;width:35px;height:5.5px;background:radial-gradient(circle at 2.75px 2.75px,#0f600f 2.4px,rgba(15,96,15,0) 2.9px) 0 0/7px 5.5px repeat-x;"></div>
<div class="t" style="left:-100.5px;top:366.43px;font-size:11.75px;line-height:15px;color:#141450;font-weight:bold;-webkit-text-stroke:0.25px currentColor;letter-spacing:0.75px;width:150.75px;text-align:right;">193</div>
<div class="t" style="left:63px;top:367.02px;font-size:11.5px;line-height:14px;color:#111111;font-weight:bold;-webkit-text-stroke:0.25px currentColor;letter-spacing:0.19px;transform:scaleX(1.0231);transform-origin:0 0;">Количество парковок/распарковок</div>
<div class="t" style="left:370px;top:366.43px;font-size:11.75px;line-height:15px;color:#147272;font-weight:bold;-webkit-text-stroke:0.25px currentColor;letter-spacing:0.75px;width:150.75px;text-align:right;">100</div>
<div class="t" style="left:437px;top:366.43px;font-size:11.75px;line-height:15px;color:#147272;font-weight:bold;-webkit-text-stroke:0.25px currentColor;letter-spacing:0.75px;width:150.75px;text-align:right;">100</div>
<div class="t" style="left:501px;top:366.43px;font-size:11.75px;line-height:15px;color:#808020;font-weight:bold;-webkit-text-stroke:0.25px currentColor;letter-spacing:0.75px;width:150.75px;text-align:right;">0</div>
<div class="t" style="left:621px;top:366.43px;font-size:11.75px;line-height:15px;color:#661010;font-weight:bold;-webkit-text-stroke:0.25px currentColor;letter-spacing:0.75px;width:150.75px;text-align:right;">13</div>
<div class="r" style="left:787.5px;top:371.5px;width:35px;height:5.5px;background:radial-gradient(circle at 2.75px 2.75px,#0f600f 2.4px,rgba(15,96,15,0) 2.9px) 0 0/7px 5.5px repeat-x;"></div>
<div class="t" style="left:-100.5px;top:383.43px;font-size:11.75px;line-height:15px;color:#141450;font-weight:bold;-webkit-text-stroke:0.25px currentColor;letter-spacing:0.75px;width:150.75px;text-align:right;">194</div>
<div class="t" style="left:63px;top:384.02px;font-size:11.5px;line-height:14px;color:#1a22a8;font-weight:bold;-webkit-text-stroke:0.25px currentColor;letter-spacing:0.19px;transform:scaleX(1.0163);transform-origin:0 0;">Температура гермоблока</div>
<div class="t" style="left:370px;top:383.43px;font-size:11.75px;line-height:15px;color:#147272;font-weight:bold;-webkit-text-stroke:0.25px currentColor;letter-spacing:0.75px;width:150.75px;text-align:right;">100</div>
<div class="t" style="left:437px;top:383.43px;font-size:11.75px;line-height:15px;color:#147272;font-weight:bold;-webkit-text-stroke:0.25px currentColor;letter-spacing:0.75px;width:150.75px;text-align:right;">100</div>
<div class="t" style="left:501px;top:383.43px;font-size:11.75px;line-height:15px;color:#808020;font-weight:bold;-webkit-text-stroke:0.25px currentColor;letter-spacing:0.75px;width:150.75px;text-align:right;">0</div>
<div class="t" style="left:621px;top:383.43px;font-size:11.75px;line-height:15px;color:#1a1aa8;font-weight:bold;-webkit-text-stroke:0.25px currentColor;letter-spacing:0.75px;width:150.75px;text-align:right;">26°C/79°F</div>
<div class="r" style="left:787.5px;top:388.5px;width:28px;height:5.5px;background:radial-gradient(circle at 2.75px 2.75px,#f0c048 2.4px,rgba(240,192,72,0) 2.9px) 0 0/7px 5.5px repeat-x;"></div>
<div class="t" style="left:-100.5px;top:400.43px;font-size:11.75px;line-height:15px;color:#141450;font-weight:bold;-webkit-text-stroke:0.25px currentColor;letter-spacing:0.75px;width:150.75px;text-align:right;">194</div>
<div class="t" style="left:63px;top:401.02px;font-size:11.5px;line-height:14px;color:#1a22a8;font-weight:bold;-webkit-text-stroke:0.25px currentColor;letter-spacing:0.19px;transform:scaleX(1.003);transform-origin:0 0;">Минимальная температура накопителя</div>
<div class="t" style="left:370px;top:400.43px;font-size:11.75px;line-height:15px;color:#147272;font-weight:bold;-webkit-text-stroke:0.25px currentColor;letter-spacing:0.75px;width:150.75px;text-align:right;">90</div>
<div class="t" style="left:437px;top:400.43px;font-size:11.75px;line-height:15px;color:#147272;font-weight:bold;-webkit-text-stroke:0.25px currentColor;letter-spacing:0.75px;width:150.75px;text-align:right;">100</div>
<div class="t" style="left:501px;top:400.43px;font-size:11.75px;line-height:15px;color:#808020;font-weight:bold;-webkit-text-stroke:0.25px currentColor;letter-spacing:0.75px;width:150.75px;text-align:right;">0</div>
<div class="t" style="left:621px;top:400.43px;font-size:11.75px;line-height:15px;color:#1a1aa8;font-weight:bold;-webkit-text-stroke:0.25px currentColor;letter-spacing:0.75px;width:150.75px;text-align:right;">24°C/75°F</div>
<div class="r" style="left:788px;top:408px;width:3px;height:1px;background:#333;"></div>
<div class="t" style="left:-100.5px;top:417.43px;font-size:11.75px;line-height:15px;color:#141450;font-weight:bold;-webkit-text-stroke:0.25px currentColor;letter-spacing:0.75px;width:150.75px;text-align:right;">194</div>
<div class="t" style="left:63px;top:418.02px;font-size:11.5px;line-height:14px;color:#1a22a8;font-weight:bold;-webkit-text-stroke:0.25px currentColor;letter-spacing:0.19px;transform:scaleX(1.0158);transform-origin:0 0;">Максимальная температура накопителя</div>
<div class="t" style="left:370px;top:417.43px;font-size:11.75px;line-height:15px;color:#147272;font-weight:bold;-webkit-text-stroke:0.25px currentColor;letter-spacing:0.75px;width:150.75px;text-align:right;">90</div>
<div class="t" style="left:437px;top:417.43px;font-size:11.75px;line-height:15px;color:#147272;font-weight:bold;-webkit-text-stroke:0.25px currentColor;letter-spacing:0.75px;width:150.75px;text-align:right;">100</div>
<div class="t" style="left:501px;top:417.43px;font-size:11.75px;line-height:15px;color:#808020;font-weight:bold;-webkit-text-stroke:0.25px currentColor;letter-spacing:0.75px;width:150.75px;text-align:right;">0</div>
<div class="t" style="left:621px;top:417.43px;font-size:11.75px;line-height:15px;color:#1a1aa8;font-weight:bold;-webkit-text-stroke:0.25px currentColor;letter-spacing:0.75px;width:150.75px;text-align:right;">26°C/78°F</div>
<div class="r" style="left:788px;top:425px;width:3px;height:1px;background:#333;"></div>
<div class="t" style="left:-100.5px;top:434.43px;font-size:11.75px;line-height:15px;color:#141450;font-weight:bold;-webkit-text-stroke:0.25px currentColor;letter-spacing:0.75px;width:150.75px;text-align:right;">196</div>
<div class="t" style="left:63px;top:435.02px;font-size:11.5px;line-height:14px;color:#7a1a88;font-weight:bold;-webkit-text-stroke:0.25px currentColor;letter-spacing:0.19px;transform:scaleX(1.0082);transform-origin:0 0;">Попыток переназначений секторов</div>
<div class="t" style="left:370px;top:434.43px;font-size:11.75px;line-height:15px;color:#147272;font-weight:bold;-webkit-text-stroke:0.25px currentColor;letter-spacing:0.75px;width:150.75px;text-align:right;">100</div>
<div class="t" style="left:437px;top:434.43px;font-size:11.75px;line-height:15px;color:#147272;font-weight:bold;-webkit-text-stroke:0.25px currentColor;letter-spacing:0.75px;width:150.75px;text-align:right;">100</div>
<div class="t" style="left:501px;top:434.43px;font-size:11.75px;line-height:15px;color:#808020;font-weight:bold;-webkit-text-stroke:0.25px currentColor;letter-spacing:0.75px;width:150.75px;text-align:right;">0</div>
<div class="t" style="left:621px;top:434.43px;font-size:11.75px;line-height:15px;color:#2f8f2f;font-weight:bold;-webkit-text-stroke:0.25px currentColor;letter-spacing:0.75px;width:150.75px;text-align:right;">0</div>
<div class="r" style="left:787.5px;top:439.5px;width:35px;height:5.5px;background:radial-gradient(circle at 2.75px 2.75px,#0f600f 2.4px,rgba(15,96,15,0) 2.9px) 0 0/7px 5.5px repeat-x;"></div>
<div class="t" style="left:-100.5px;top:451.43px;font-size:11.75px;line-height:15px;color:#141450;font-weight:bold;-webkit-text-stroke:0.25px currentColor;letter-spacing:0.75px;width:150.75px;text-align:right;">197</div>
<div class="t" style="left:63px;top:452.02px;font-size:11.5px;line-height:14px;color:#7a1a88;font-weight:bold;-webkit-text-stroke:0.25px currentColor;letter-spacing:0.19px;transform:scaleX(1.0201);transform-origin:0 0;">Кандидатов на переназначение</div>
<div class="t" style="left:370px;top:451.43px;font-size:11.75px;line-height:15px;color:#147272;font-weight:bold;-webkit-text-stroke:0.25px currentColor;letter-spacing:0.75px;width:150.75px;text-align:right;">100</div>
<div class="t" style="left:437px;top:451.43px;font-size:11.75px;line-height:15px;color:#147272;font-weight:bold;-webkit-text-stroke:0.25px currentColor;letter-spacing:0.75px;width:150.75px;text-align:right;">100</div>
<div class="t" style="left:501px;top:451.43px;font-size:11.75px;line-height:15px;color:#808020;font-weight:bold;-webkit-text-stroke:0.25px currentColor;letter-spacing:0.75px;width:150.75px;text-align:right;">0</div>
<div class="t" style="left:621px;top:451.43px;font-size:11.75px;line-height:15px;color:#2f8f2f;font-weight:bold;-webkit-text-stroke:0.25px currentColor;letter-spacing:0.75px;width:150.75px;text-align:right;">0</div>
<div class="r" style="left:787.5px;top:456.5px;width:35px;height:5.5px;background:radial-gradient(circle at 2.75px 2.75px,#0f600f 2.4px,rgba(15,96,15,0) 2.9px) 0 0/7px 5.5px repeat-x;"></div>
<div class="t" style="left:-100.5px;top:468.43px;font-size:11.75px;line-height:15px;color:#141450;font-weight:bold;-webkit-text-stroke:0.25px currentColor;letter-spacing:0.75px;width:150.75px;text-align:right;">198</div>
<div class="t" style="left:63px;top:469.02px;font-size:11.5px;line-height:14px;color:#7a1a88;font-weight:bold;-webkit-text-stroke:0.25px currentColor;letter-spacing:0.19px;transform:scaleX(1.017);transform-origin:0 0;">Дефектные секторы во время самотеста</div>
<div class="t" style="left:370px;top:468.43px;font-size:11.75px;line-height:15px;color:#147272;font-weight:bold;-webkit-text-stroke:0.25px currentColor;letter-spacing:0.75px;width:150.75px;text-align:right;">100</div>
<div class="t" style="left:437px;top:468.43px;font-size:11.75px;line-height:15px;color:#147272;font-weight:bold;-webkit-text-stroke:0.25px currentColor;letter-spacing:0.75px;width:150.75px;text-align:right;">100</div>
<div class="t" style="left:501px;top:468.43px;font-size:11.75px;line-height:15px;color:#808020;font-weight:bold;-webkit-text-stroke:0.25px currentColor;letter-spacing:0.75px;width:150.75px;text-align:right;">0</div>
<div class="t" style="left:621px;top:468.43px;font-size:11.75px;line-height:15px;color:#2f8f2f;font-weight:bold;-webkit-text-stroke:0.25px currentColor;letter-spacing:0.75px;width:150.75px;text-align:right;">0</div>
<div class="r" style="left:787.5px;top:473.5px;width:35px;height:5.5px;background:radial-gradient(circle at 2.75px 2.75px,#0f600f 2.4px,rgba(15,96,15,0) 2.9px) 0 0/7px 5.5px repeat-x;"></div>
<div class="t" style="left:-100.5px;top:485.43px;font-size:11.75px;line-height:15px;color:#141450;font-weight:bold;-webkit-text-stroke:0.25px currentColor;letter-spacing:0.75px;width:150.75px;text-align:right;">199</div>
<div class="t" style="left:63px;top:486.02px;font-size:11.5px;line-height:14px;color:#111111;font-weight:bold;-webkit-text-stroke:0.25px currentColor;letter-spacing:0.19px;transform:scaleX(0.9954);transform-origin:0 0;">Ошибки передачи данных через DMA</div>
<div class="t" style="left:370px;top:485.43px;font-size:11.75px;line-height:15px;color:#147272;font-weight:bold;-webkit-text-stroke:0.25px currentColor;letter-spacing:0.75px;width:150.75px;text-align:right;">200</div>
<div class="t" style="left:437px;top:485.43px;font-size:11.75px;line-height:15px;color:#147272;font-weight:bold;-webkit-text-stroke:0.25px currentColor;letter-spacing:0.75px;width:150.75px;text-align:right;">200</div>
<div class="t" style="left:501px;top:485.43px;font-size:11.75px;line-height:15px;color:#808020;font-weight:bold;-webkit-text-stroke:0.25px currentColor;letter-spacing:0.75px;width:150.75px;text-align:right;">0</div>
<div class="t" style="left:621px;top:485.43px;font-size:11.75px;line-height:15px;color:#2f8f2f;font-weight:bold;-webkit-text-stroke:0.25px currentColor;letter-spacing:0.75px;width:150.75px;text-align:right;">0</div>
<div class="r" style="left:787.5px;top:490.5px;width:35px;height:5.5px;background:radial-gradient(circle at 2.75px 2.75px,#0f600f 2.4px,rgba(15,96,15,0) 2.9px) 0 0/7px 5.5px repeat-x;"></div>
<div class="t" style="left:-100.5px;top:502.43px;font-size:11.75px;line-height:15px;color:#141450;font-weight:bold;-webkit-text-stroke:0.25px currentColor;letter-spacing:0.75px;width:150.75px;text-align:right;">220</div>
<div class="t" style="left:63px;top:503.02px;font-size:11.5px;line-height:14px;color:#111111;font-weight:bold;-webkit-text-stroke:0.25px currentColor;letter-spacing:0.19px;transform:scaleX(0.9763);transform-origin:0 0;">Смещение дисков</div>
<div class="t" style="left:370px;top:502.43px;font-size:11.75px;line-height:15px;color:#147272;font-weight:bold;-webkit-text-stroke:0.25px currentColor;letter-spacing:0.75px;width:150.75px;text-align:right;">100</div>
<div class="t" style="left:437px;top:502.43px;font-size:11.75px;line-height:15px;color:#147272;font-weight:bold;-webkit-text-stroke:0.25px currentColor;letter-spacing:0.75px;width:150.75px;text-align:right;">100</div>
<div class="t" style="left:501px;top:502.43px;font-size:11.75px;line-height:15px;color:#808020;font-weight:bold;-webkit-text-stroke:0.25px currentColor;letter-spacing:0.75px;width:150.75px;text-align:right;">0</div>
<div class="t" style="left:621px;top:502.43px;font-size:11.75px;line-height:15px;color:#661010;font-weight:bold;-webkit-text-stroke:0.25px currentColor;letter-spacing:0.75px;width:150.75px;text-align:right;">0</div>
<div class="r" style="left:787.5px;top:507.5px;width:35px;height:5.5px;background:radial-gradient(circle at 2.75px 2.75px,#0f600f 2.4px,rgba(15,96,15,0) 2.9px) 0 0/7px 5.5px repeat-x;"></div>
<div class="t" style="left:-100.5px;top:519.43px;font-size:11.75px;line-height:15px;color:#141450;font-weight:bold;-webkit-text-stroke:0.25px currentColor;letter-spacing:0.75px;width:150.75px;text-align:right;">222</div>
<div class="t" style="left:63px;top:520.02px;font-size:11.5px;line-height:14px;color:#111111;font-weight:bold;-webkit-text-stroke:0.25px currentColor;letter-spacing:0.19px;transform:scaleX(0.9752);transform-origin:0 0;">Время в распаркованном состоянии</div>
<div class="t" style="left:370px;top:519.43px;font-size:11.75px;line-height:15px;color:#147272;font-weight:bold;-webkit-text-stroke:0.25px currentColor;letter-spacing:0.75px;width:150.75px;text-align:right;">100</div>
<div class="t" style="left:437px;top:519.43px;font-size:11.75px;line-height:15px;color:#147272;font-weight:bold;-webkit-text-stroke:0.25px currentColor;letter-spacing:0.75px;width:150.75px;text-align:right;">100</div>
<div class="t" style="left:501px;top:519.43px;font-size:11.75px;line-height:15px;color:#808020;font-weight:bold;-webkit-text-stroke:0.25px currentColor;letter-spacing:0.75px;width:150.75px;text-align:right;">0</div>
<div class="t" style="left:621px;top:519.43px;font-size:11.75px;line-height:15px;color:#661010;font-weight:bold;-webkit-text-stroke:0.25px currentColor;letter-spacing:0.75px;width:150.75px;text-align:right;">0</div>
<div class="r" style="left:787.5px;top:524.5px;width:35px;height:5.5px;background:radial-gradient(circle at 2.75px 2.75px,#0f600f 2.4px,rgba(15,96,15,0) 2.9px) 0 0/7px 5.5px repeat-x;"></div>
<div class="t" style="left:-100.5px;top:536.43px;font-size:11.75px;line-height:15px;color:#141450;font-weight:bold;-webkit-text-stroke:0.25px currentColor;letter-spacing:0.75px;width:150.75px;text-align:right;">223</div>
<div class="t" style="left:63px;top:537.02px;font-size:11.5px;line-height:14px;color:#111111;font-weight:bold;-webkit-text-stroke:0.25px currentColor;letter-spacing:0.19px;transform:scaleX(1.0069);transform-origin:0 0;">Число повторных попыток запарковаться</div>
<div class="t" style="left:370px;top:536.43px;font-size:11.75px;line-height:15px;color:#147272;font-weight:bold;-webkit-text-stroke:0.25px currentColor;letter-spacing:0.75px;width:150.75px;text-align:right;">100</div>
<div class="t" style="left:437px;top:536.43px;font-size:11.75px;line-height:15px;color:#147272;font-weight:bold;-webkit-text-stroke:0.25px currentColor;letter-spacing:0.75px;width:150.75px;text-align:right;">100</div>
<div class="t" style="left:501px;top:536.43px;font-size:11.75px;line-height:15px;color:#808020;font-weight:bold;-webkit-text-stroke:0.25px currentColor;letter-spacing:0.75px;width:150.75px;text-align:right;">0</div>
<div class="t" style="left:621px;top:536.43px;font-size:11.75px;line-height:15px;color:#2f8f2f;font-weight:bold;-webkit-text-stroke:0.25px currentColor;letter-spacing:0.75px;width:150.75px;text-align:right;">0</div>
<div class="r" style="left:787.5px;top:541.5px;width:35px;height:5.5px;background:radial-gradient(circle at 2.75px 2.75px,#0f600f 2.4px,rgba(15,96,15,0) 2.9px) 0 0/7px 5.5px repeat-x;"></div>
<div class="t" style="left:-100.5px;top:553.43px;font-size:11.75px;line-height:15px;color:#141450;font-weight:bold;-webkit-text-stroke:0.25px currentColor;letter-spacing:0.75px;width:150.75px;text-align:right;">224</div>
<div class="t" style="left:63px;top:554.02px;font-size:11.5px;line-height:14px;color:#111111;font-weight:bold;-webkit-text-stroke:0.25px currentColor;letter-spacing:0.19px;transform:scaleX(1.0092);transform-origin:0 0;">Трение в парковке</div>
<div class="t" style="left:370px;top:553.43px;font-size:11.75px;line-height:15px;color:#147272;font-weight:bold;-webkit-text-stroke:0.25px currentColor;letter-spacing:0.75px;width:150.75px;text-align:right;">100</div>
<div class="t" style="left:437px;top:553.43px;font-size:11.75px;line-height:15px;color:#147272;font-weight:bold;-webkit-text-stroke:0.25px currentColor;letter-spacing:0.75px;width:150.75px;text-align:right;">100</div>
<div class="t" style="left:501px;top:553.43px;font-size:11.75px;line-height:15px;color:#808020;font-weight:bold;-webkit-text-stroke:0.25px currentColor;letter-spacing:0.75px;width:150.75px;text-align:right;">0</div>
<div class="t" style="left:621px;top:553.43px;font-size:11.75px;line-height:15px;color:#661010;font-weight:bold;-webkit-text-stroke:0.25px currentColor;letter-spacing:0.75px;width:150.75px;text-align:right;">0</div>
<div class="r" style="left:787.5px;top:558.5px;width:35px;height:5.5px;background:radial-gradient(circle at 2.75px 2.75px,#0f600f 2.4px,rgba(15,96,15,0) 2.9px) 0 0/7px 5.5px repeat-x;"></div>
<div class="t" style="left:-100.5px;top:570.43px;font-size:11.75px;line-height:15px;color:#141450;font-weight:bold;-webkit-text-stroke:0.25px currentColor;letter-spacing:0.75px;width:150.75px;text-align:right;">226</div>
<div class="t" style="left:63px;top:571.02px;font-size:11.5px;line-height:14px;color:#111111;font-weight:bold;-webkit-text-stroke:0.25px currentColor;letter-spacing:0.19px;transform:scaleX(0.98);transform-origin:0 0;">Время в запаркованном состоянии</div>
<div class="t" style="left:370px;top:570.43px;font-size:11.75px;line-height:15px;color:#147272;font-weight:bold;-webkit-text-stroke:0.25px currentColor;letter-spacing:0.75px;width:150.75px;text-align:right;">100</div>
<div class="t" style="left:437px;top:570.43px;font-size:11.75px;line-height:15px;color:#147272;font-weight:bold;-webkit-text-stroke:0.25px currentColor;letter-spacing:0.75px;width:150.75px;text-align:right;">100</div>
<div class="t" style="left:501px;top:570.43px;font-size:11.75px;line-height:15px;color:#808020;font-weight:bold;-webkit-text-stroke:0.25px currentColor;letter-spacing:0.75px;width:150.75px;text-align:right;">0</div>
<div class="t" style="left:621px;top:570.43px;font-size:11.75px;line-height:15px;color:#661010;font-weight:bold;-webkit-text-stroke:0.25px currentColor;letter-spacing:0.75px;width:150.75px;text-align:right;">288</div>
<div class="r" style="left:787.5px;top:575.5px;width:35px;height:5.5px;background:radial-gradient(circle at 2.75px 2.75px,#0f600f 2.4px,rgba(15,96,15,0) 2.9px) 0 0/7px 5.5px repeat-x;"></div>
<div class="t" style="left:-100.5px;top:587.43px;font-size:11.75px;line-height:15px;color:#141450;font-weight:bold;-webkit-text-stroke:0.25px currentColor;letter-spacing:0.75px;width:150.75px;text-align:right;">240</div>
<div class="t" style="left:63px;top:588.02px;font-size:11.5px;line-height:14px;color:#127012;font-weight:bold;-webkit-text-stroke:0.25px currentColor;letter-spacing:0.19px;transform:scaleX(1.0207);transform-origin:0 0;">Время нахождения головок над диском</div>
<div class="t" style="left:370px;top:587.43px;font-size:11.75px;line-height:15px;color:#147272;font-weight:bold;-webkit-text-stroke:0.25px currentColor;letter-spacing:0.75px;width:150.75px;text-align:right;">100</div>
<div class="t" style="left:437px;top:587.43px;font-size:11.75px;line-height:15px;color:#147272;font-weight:bold;-webkit-text-stroke:0.25px currentColor;letter-spacing:0.75px;width:150.75px;text-align:right;">100</div>
<div class="t" style="left:501px;top:587.43px;font-size:11.75px;line-height:15px;color:#808020;font-weight:bold;-webkit-text-stroke:0.25px currentColor;letter-spacing:0.75px;width:150.75px;text-align:right;">1</div>
<div class="t" style="left:621px;top:587.43px;font-size:11.75px;line-height:15px;color:#661010;font-weight:bold;-webkit-text-stroke:0.25px currentColor;letter-spacing:0.75px;width:150.75px;text-align:right;">0</div>
<div class="r" style="left:787.5px;top:592.5px;width:35px;height:5.5px;background:radial-gradient(circle at 2.75px 2.75px,#0f600f 2.4px,rgba(15,96,15,0) 2.9px) 0 0/7px 5.5px repeat-x;"></div>
<div class="r" style="left:13px;top:658px;width:975px;height:28px;background:#d8d8d8;"></div>
<div class="r" style="left:13px;top:661px;width:975px;height:1px;background:#a8a8a8;"></div>
<div class="r" style="left:13px;top:658px;width:975px;height:3px;background:#ececec;"></div>
<div class="r" style="left:13px;top:684px;width:975px;height:2px;background:#fafafa;"></div>
<div class="r" style="left:14px;top:664px;width:170px;height:19px;box-sizing:border-box;border:1px solid #707070;border-radius:3px;background:linear-gradient(#f4f4f4,#e6e6e6 50%,#d8d8d8 51%,#cfcfcf);"></div>
<div class="t" style="left:19px;top:667.24px;font-size:12.3px;line-height:15px;color:#111;">Получить атрибуты SMART</div>
<div class="t" style="left:204px;top:667.34px;font-size:12px;line-height:15px;color:#111;">Статус:</div>
<div class="r" style="left:250px;top:665px;width:58px;height:17px;background:#14e814;border:1px solid #1a1a1a;box-sizing:border-box;"></div>
<div class="t" style="left:250px;top:667.34px;font-size:12px;line-height:15px;color:#0a5a0a;width:58px;text-align:center;">GOOD</div>
<div class="r" style="left:337px;top:667px;width:13px;height:13px;background:linear-gradient(#e8e8e8,#fff);border:1px solid #8a8a8a;box-sizing:border-box;"></div>
<div class="t" style="left:355px;top:667.29px;font-size:12.15px;line-height:15px;color:#111;">RAW отображать в HEX</div>
<div class="t" style="left:818px;top:667.34px;font-size:12px;line-height:15px;color:#111;">IBM super smart:</div>
<div class="r" style="left:915px;top:667px;width:13px;height:13px;background:linear-gradient(#dfe6ee,#f6f8fa);border:1px solid #8a8a8a;box-sizing:border-box;"></div>
<svg class="r" style="left:915px;top:667px" width="13" height="13"><path d="M3 6.5 L5.5 10 L10 2.5" stroke="#3a4a80" stroke-width="1.8" fill="none"/></svg>
<div class="r" style="left:946px;top:667px;width:13px;height:13px;background:#e00000;border:1px solid #600;border-radius:2px;box-sizing:border-box;"></div>
<div class="r" style="left:989px;top:130px;width:72px;height:556px;background:#a4a4a4;"></div>
<div class="r" style="left:992px;top:682px;width:69px;height:1px;background:#9c9c9c;"></div>
<div class="r" style="left:989px;top:131px;width:1px;height:555px;background:#fff;"></div>
<div class="r" style="left:990px;top:130px;width:2px;height:556px;background:#7a7a7a;"></div>
<div class="r" style="left:990px;top:130px;width:71px;height:1px;background:#7a7a7a;"></div>
<div class="r" style="left:1001px;top:141px;width:11px;height:11px;border-radius:50%;border:2px solid #e8e8e8;box-sizing:border-box;background:#8a8a8a;"></div>
<div class="r" style="left:1001px;top:163px;width:11px;height:11px;border-radius:50%;background:radial-gradient(#f4f4f4,#d8d8d8);"></div>
<div class="t" style="left:1019px;top:140.34px;font-size:12px;line-height:15px;color:#7a7a7a;">API</div>
<div class="t" style="left:1019px;top:162.34px;font-size:12px;line-height:15px;color:#7a7a7a;">PIO</div>
<div class="r" style="left:999px;top:190px;width:19px;height:10px;background:#808080;border:1px solid #111;box-sizing:border-box;"></div>
<div class="r" style="left:999px;top:220px;width:56px;height:23px;box-sizing:border-box;border:1px solid #707070;border-radius:3px;background:linear-gradient(#f6f6f6,#eaeaea 50%,#dadada 51%,#d0d0d0);"></div><div class="t" style="left:999px;top:223.50px;font-size:13px;line-height:16px;color:#111;width:56px;text-align:center;">Sleep</div>
<div class="r" style="left:999px;top:282px;width:56px;height:23px;box-sizing:border-box;border:1px solid #707070;border-radius:3px;background:linear-gradient(#f6f6f6,#eaeaea 50%,#dadada 51%,#d0d0d0);"></div><div class="t" style="left:999px;top:285.50px;font-size:13px;line-height:16px;color:#111;width:56px;text-align:center;">Recall</div>
<div class="r" style="left:999px;top:639px;width:56px;height:23px;box-sizing:border-box;border:1px solid #707070;border-radius:3px;background:linear-gradient(#f6f6f6,#eaeaea 50%,#dadada 51%,#d0d0d0);"></div><div class="t" style="left:999px;top:642.50px;font-size:13px;line-height:16px;color:#111;width:56px;text-align:center;">Passp</div>
<div class="r" style="left:997px;top:570px;width:27px;height:13px;box-sizing:border-box;border:1px solid #333;border-radius:2px;background:#a0a0a0;"></div>
<div class="r" style="left:1029px;top:570px;width:27px;height:13px;box-sizing:border-box;border:1px solid #333;border-radius:2px;background:#a0a0a0;"></div>
<div class="t" style="left:997px;top:572.38px;font-size:9px;line-height:11px;color:#bcbcbc;font-weight:bold;-webkit-text-stroke:0.25px currentColor;width:27px;text-align:center;">WR</div>
<div class="t" style="left:1029px;top:572.38px;font-size:9px;line-height:11px;color:#bcbcbc;font-weight:bold;-webkit-text-stroke:0.25px currentColor;width:27px;text-align:center;">RD</div>
<div class="r" style="left:8px;top:687px;width:981px;height:4px;background:#fbfbfb;"></div>
<div class="r" style="left:989px;top:686px;width:72px;height:5px;background:#fbfbfb;"></div>
<div class="r" style="left:8px;top:691px;width:981px;height:337px;background:#f3f3f3;"></div>
<div class="r" style="left:8px;top:691px;width:981px;height:1px;background:#8a8a8a;"></div>
<div class="t" style="left:18px;top:695.63px;font-size:12.6px;line-height:16px;color:#111;letter-spacing:0.7px;">17:53:47</div>
<div class="t" style="left:86px;top:695.63px;font-size:12.6px;line-height:16px;color:#111;transform:scaleX(1.0094);transform-origin:0 0;">API access enabled, device #0</div>
<div class="t" style="left:18px;top:715.63px;font-size:12.6px;line-height:16px;color:#111;letter-spacing:0.7px;">17:53:47</div>
<div class="t" style="left:86px;top:715.63px;font-size:12.6px;line-height:16px;color:#8a1c1c;transform:scaleX(0.9859);transform-origin:0 0;">Press F1 to About/HELP</div>
<div class="t" style="left:18px;top:735.63px;font-size:12.6px;line-height:16px;color:#111;letter-spacing:0.7px;">17:53:47</div>
<div class="t" style="left:86px;top:735.63px;font-size:12.6px;line-height:16px;color:#111;transform:scaleX(1.0082);transform-origin:0 0;">Get drive passport... OK</div>
<div class="t" style="left:18px;top:755.63px;font-size:12.6px;line-height:16px;color:#111;letter-spacing:0.7px;">17:53:47</div>
<div class="t" style="left:86px;top:755.63px;font-size:12.6px;line-height:16px;color:#111;transform:scaleX(0.9959);transform-origin:0 0;">Model: WDC WD10EZEX-08M2NA0; Capacity: 1953525168 LBAs; SN: WD-WCC3F5016308; FW: 01.01A01</div>
<div class="t" style="left:18px;top:775.63px;font-size:12.6px;line-height:16px;color:#111;letter-spacing:0.7px;">17:55:08</div>
<div class="t" style="left:86px;top:775.63px;font-size:12.6px;line-height:16px;color:#111;transform:scaleX(1.0082);transform-origin:0 0;">Get drive passport... OK</div>
<div class="t" style="left:18px;top:795.63px;font-size:12.6px;line-height:16px;color:#111;letter-spacing:0.7px;">17:55:08</div>
<div class="t" style="left:86px;top:795.63px;font-size:12.6px;line-height:16px;color:#111;transform:scaleX(0.9975);transform-origin:0 0;">Model: TOSHIBA MQ04UBB400; Capacity 7814037164 LBAs; SN: 708FT169T; FW: JS000U</div>
<div class="t" style="left:18px;top:815.63px;font-size:12.6px;line-height:16px;color:#111;letter-spacing:0.7px;">17:55:52</div>
<div class="t" style="left:86px;top:815.63px;font-size:12.6px;line-height:16px;color:#111;transform:scaleX(1.0144);transform-origin:0 0;">Get S.M.A.R.T. command... OK</div>
<div class="t" style="left:18px;top:835.63px;font-size:12.6px;line-height:16px;color:#111;letter-spacing:0.7px;">17:55:52</div>
<div class="t" style="left:86px;top:835.63px;font-size:12.6px;line-height:16px;color:#111;transform:scaleX(1.0024);transform-origin:0 0;">SMART base updated.</div>
<div class="t" style="left:18px;top:855.63px;font-size:12.6px;line-height:16px;color:#111;letter-spacing:0.7px;">17:55:52</div>
<div class="t" style="left:86px;top:855.63px;font-size:12.6px;line-height:16px;color:#111;transform:scaleX(0.9833);transform-origin:0 0;">SMART status = GOOD</div>
<div class="t" style="left:18px;top:875.63px;font-size:12.6px;line-height:16px;color:#111;letter-spacing:0.7px;">17:56:12</div>
<div class="t" style="left:86px;top:875.63px;font-size:12.6px;line-height:16px;color:#111;transform:scaleX(0.9822);transform-origin:0 0;">Русский</div>
<div class="t" style="left:18px;top:895.63px;font-size:12.6px;line-height:16px;color:#111;letter-spacing:0.7px;">17:59:27</div>
<div class="t" style="left:86px;top:895.63px;font-size:12.6px;line-height:16px;color:#111;transform:scaleX(1.0108);transform-origin:0 0;">Получение паспорта накопителя... OK</div>
<div class="t" style="left:18px;top:915.63px;font-size:12.6px;line-height:16px;color:#111;letter-spacing:0.7px;">17:59:27</div>
<div class="t" style="left:86px;top:915.63px;font-size:12.6px;line-height:16px;color:#111;transform:scaleX(1.0002);transform-origin:0 0;">Model: TOSHIBA MQ04UBB400; Size 7814037164 LBAs; SN: 708FT169T; FW: JS000U</div>
<div class="t" style="left:18px;top:935.63px;font-size:12.6px;line-height:16px;color:#111;letter-spacing:0.7px;">17:59:53</div>
<div class="t" style="left:86px;top:935.63px;font-size:12.6px;line-height:16px;color:#111;transform:scaleX(1.0144);transform-origin:0 0;">Get S.M.A.R.T. command... OK</div>
<div class="t" style="left:18px;top:955.63px;font-size:12.6px;line-height:16px;color:#111;letter-spacing:0.7px;">17:59:53</div>
<div class="t" style="left:86px;top:955.63px;font-size:12.6px;line-height:16px;color:#111;transform:scaleX(0.9833);transform-origin:0 0;">SMART status = GOOD</div>
<div class="t" style="left:18px;top:975.63px;font-size:12.6px;line-height:16px;color:#111;letter-spacing:0.7px;">18:00:12</div>
<div class="t" style="left:86px;top:975.63px;font-size:12.6px;line-height:16px;color:#111;transform:scaleX(1.0144);transform-origin:0 0;">Get S.M.A.R.T. command... OK</div>
<div class="t" style="left:18px;top:995.63px;font-size:12.6px;line-height:16px;color:#111;letter-spacing:0.7px;">18:00:12</div>
<div class="t" style="left:86px;top:995.63px;font-size:12.6px;line-height:16px;color:#2a2aa0;transform:scaleX(0.9833);transform-origin:0 0;">SMART status = GOOD</div>
<div class="r" style="left:972px;top:692px;width:16px;height:336px;background:linear-gradient(90deg,#e8e8e8,#f6f6f6 30%,#f6f6f6 70%,#ececec);"></div>
<svg class="r" style="left:976px;top:698px" width="9" height="6"><path d="M0.5 5 L4.5 1 L8.5 5Z" fill="#333"/></svg>
<div class="r" style="left:972px;top:759px;width:15px;height:252px;box-sizing:border-box;border:1px solid #9a9a9a;border-radius:2px;background:linear-gradient(90deg,#f0f0f0,#e6e6e6 50%,#d0d0d0);"></div>
<svg class="r" style="left:976px;top:880px" width="8" height="9"><rect x="0" y="0" width="7" height="1" fill="#333"/><rect x="0" y="2" width="7" height="1" fill="#333"/><rect x="0" y="4" width="7" height="1" fill="#333"/><rect x="0" y="6" width="7" height="1" fill="#333"/></svg>
<svg class="r" style="left:976px;top:1018px" width="9" height="6"><path d="M0.5 1 L4.5 5 L8.5 1Z" fill="#333"/></svg>
<div class="r" style="left:989px;top:691px;width:72px;height:337px;background:#a9a9a9;"></div>
<div class="r" style="left:989px;top:691px;width:1px;height:337px;background:#9a9a9a;"></div>
<div class="r" style="left:1000px;top:701px;width:12px;height:12px;background:linear-gradient(#dde4ee,#f8fafc);border:1px solid #8a8a8a;box-sizing:border-box;"></div>
<svg class="r" style="left:1000px;top:701px" width="12" height="12"><path d="M2.5 6 L5 9.5 L9.5 2" stroke="#3a4a80" stroke-width="1.8" fill="none"/></svg>
<div class="r" style="left:1000px;top:724px;width:12px;height:12px;background:linear-gradient(#dde4ee,#f8fafc);border:1px solid #8a8a8a;box-sizing:border-box;"></div>
<svg class="r" style="left:1000px;top:724px" width="12" height="12"><path d="M2.5 6 L5 9.5 L9.5 2" stroke="#3a4a80" stroke-width="1.8" fill="none"/></svg>
<div class="t" style="left:1017px;top:700.34px;font-size:12px;line-height:15px;color:#111;">Звук</div>
<div class="t" style="left:1017px;top:723.34px;font-size:12px;line-height:15px;color:#111;">Hints</div>
</body></html>
